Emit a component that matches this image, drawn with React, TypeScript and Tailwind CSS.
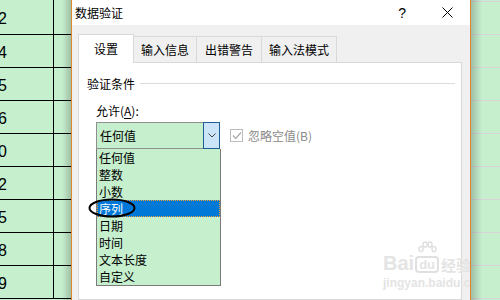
import React from 'react';

const leftDigits = ['2', '4', '5', '6', '0', '2', '5', '8', '9'];
const listItems = ['任何值', '整数', '小数', '序列', '日期', '时间', '文本长度', '自定义'];
const tabs = [
    { label: '设置', w: 'w-[56px]', active: true },
    { label: '输入信息', w: 'w-[64px]', active: false },
    { label: '出错警告', w: 'w-[66px]', active: false },
    { label: '输入法模式', w: 'w-[76px]', active: false }
];

const cjk = { fontFamily: '"Noto Sans CJK SC", "Noto Sans", sans-serif' };

// 左侧表格（被对话框遮住的部分）
const LeftSheet: React.FC = () => (
    <div className="relative w-[71px] shrink-0 bg-[#c6efce] overflow-hidden">
        {leftDigits.map((d, i) => (
            <div
                key={i}
                className={`flex border-b border-black ${i === 0 ? 'h-[35px]' : 'h-[33px]'}`}
            >
                <div className="w-[54px] border-r border-black flex items-center pt-[3px]">
                    <span className="-ml-[2px] text-[16px] text-black" style={{ fontFamily: '"Liberation Sans", sans-serif' }}>
                        {d}
                    </span>
                </div>
                <div className="flex-1" />
            </div>
        ))}
        <div className="absolute top-0 right-0 h-full w-[9px] bg-gradient-to-r from-transparent to-black/20" />
    </div>
);

const RightSheet: React.FC = () => (
    <div className="relative flex-1 bg-[#c6efce] overflow-hidden">
        <div className="h-[2px] border-b border-[#d9d2d9]" />
        {Array.from({ length: 9 }).map((_, i) => (
            <div key={i} className="h-[33px] border-b border-[#d9d2d9]" />
        ))}
        <div className="absolute top-0 left-0 h-full w-[11px] bg-gradient-to-r from-black/20 to-transparent" />
    </div>
);

const Watermark: React.FC = () => (
    <div className="absolute left-[311px] top-[245px] flex flex-col text-[#e4e4e4] pointer-events-none">
        <div className="flex items-end h-[28px]">
            <span className="text-[20px] font-bold leading-[20px]" style={{ fontFamily: '"Liberation Sans", sans-serif' }}>Bai</span>
            <div className="relative flex flex-col items-center ml-[1px]">
                <svg width="20" height="14" viewBox="0 0 20 14" className="mb-[1px]">
                    <g fill="none" stroke="#e0e0e0" strokeWidth="1.5">
                        <ellipse cx="4" cy="8" rx="2" ry="2.6" />
                        <ellipse cx="8" cy="3.5" rx="2" ry="2.6" />
                        <ellipse cx="13" cy="3.5" rx="2" ry="2.6" />
                        <ellipse cx="17" cy="8" rx="2" ry="2.6" />
                    </g>
                </svg>
                <span
                    className="text-[13px] font-bold leading-[13px] px-[2px] rounded-[4px] border-2 border-[#e0e0e0]"
                    style={{ fontFamily: '"Liberation Sans", sans-serif' }}
                >
                    du
                </span>
            </div>
            <span className="text-[15px] font-bold leading-[17px] ml-[2px]" style={cjk}>经验</span>
        </div>
        <span className="text-[12px] font-bold leading-[14px] mt-[3px]" style={{ fontFamily: '"Liberation Sans", sans-serif' }}>
            jingyan.baidu.com
        </span>
    </div>
);

const Dialog: React.FC = () => (
    <div className="relative w-[400px] shrink-0 flex flex-col bg-[#f0f0f0] border-x border-[#e0862c] overflow-hidden text-[12px] text-black" style={cjk}>
        {/* 标题栏 */}
        <div className="h-[25px] bg-white flex items-center pl-[3px] pr-[17px]">
            <span className="leading-[16px]">数据验证</span>
            <span className="ml-auto text-[14px] leading-[16px]" style={{ fontFamily: '"Liberation Sans", sans-serif' }}>?</span>
            <svg width="11" height="11" viewBox="0 0 11 11" className="ml-[36px]">
                <path d="M0.5 0.5 L10.5 10.5 M10.5 0.5 L0.5 10.5" stroke="#000" strokeWidth="1" />
            </svg>
        </div>

        <div className="flex-1 flex flex-col pl-[6px] pr-[8px] pt-[9px]">
            {/* 标签页 */}
            <div className="flex items-end h-[28px]">
                {tabs.map((t) => (
                    <div
                        key={t.label}
                        className={`${t.w} flex items-center justify-center border border-b-0 border-[#d9d9d9] -mr-px ${t.active
                            ? 'h-[29px] bg-white relative z-10 -mb-px pb-[1px]'
                            : 'h-[26px] bg-[#f0f0f0]'
                            }`}
                    >
                        <span className="leading-[16px]">{t.label}</span>
                    </div>
                ))}
            </div>

            {/* 面板 */}
            <div className="flex-1 bg-white border border-[#d9d9d9] pl-[8px] pr-[6px]">
                <div className="flex items-center h-[17px] mt-[12px]">
                    <span className="leading-[17px]">验证条件</span>
                    <div className="flex-1 h-px bg-[#dcdcdc] ml-[5px]" />
                </div>

                <div className="pl-[9px] mt-[10px]">
                    <div className="h-[17px] leading-[17px]">
                        允许(<span className="underline underline-offset-2">A</span>):
                    </div>

                    <div className="flex items-center mt-[3px]">
                        <div className="w-[124px] h-[27px] flex border border-[#8f8f8f] border-r-0 bg-[#c6efce]">
                            <div className="flex-1 flex items-center pl-[3px]">
                                <span className="leading-[16px]">任何值</span>
                            </div>
                            <div className="w-[17px] h-[27px] -mt-px flex items-center justify-center bg-[#cce4f7] border border-[#1f5d96]">
                                <svg width="8" height="5" viewBox="0 0 8 5">
                                    <path d="M0.5 0.5 L4 4 L7.5 0.5" fill="none" stroke="#444" strokeWidth="1" />
                                </svg>
                            </div>
                        </div>

                        <div className="ml-[10px] w-[13px] h-[13px] border border-[#bcbcbc] bg-white flex items-center justify-center">
                            <svg width="10" height="9" viewBox="0 0 10 9">
                                <path d="M1 4.5 L3.8 7.3 L9 1.5" fill="none" stroke="#a6a6a6" strokeWidth="1.2" />
                            </svg>
                        </div>
                        <span className="ml-[5px] text-[#8a8a8a] leading-[16px]">忽略空值(B)</span>
                    </div>

                    {/* 下拉列表 */}
                    <div className="w-[125px] border border-t-0 border-[#7a7a7a] bg-[#c6efce]">
                        {listItems.map((item) => {
                            const selected = item === '序列';
                            return (
                                <div
                                    key={item}
                                    className={`relative h-[17px] leading-[17px] pl-[2px] ${selected
                                        ? 'bg-[#0078d7] text-white outline outline-1 outline-dotted outline-[#f0a030] -outline-offset-1'
                                        : ''
                                        }`}
                                >
                                    {item}
                                    {selected && (
                                        <svg width="48" height="20" viewBox="0 0 48 20" className="absolute -left-[9px] -top-[2px] overflow-visible">
                                            <ellipse cx="24" cy="10" rx="22.5" ry="8.5" fill="none" stroke="#000" strokeWidth="2" />
                                        </svg>
                                    )}
                                </div>
                            );
                        })}
                    </div>
                </div>
            </div>
        </div>

        <Watermark />
    </div>
);

export default function App() {
    return (
        <div className="w-[500px] h-[300px] flex overflow-hidden bg-[#c6efce]">
            <LeftSheet />
            <Dialog />
            <RightSheet />
        </div>
    );
}
